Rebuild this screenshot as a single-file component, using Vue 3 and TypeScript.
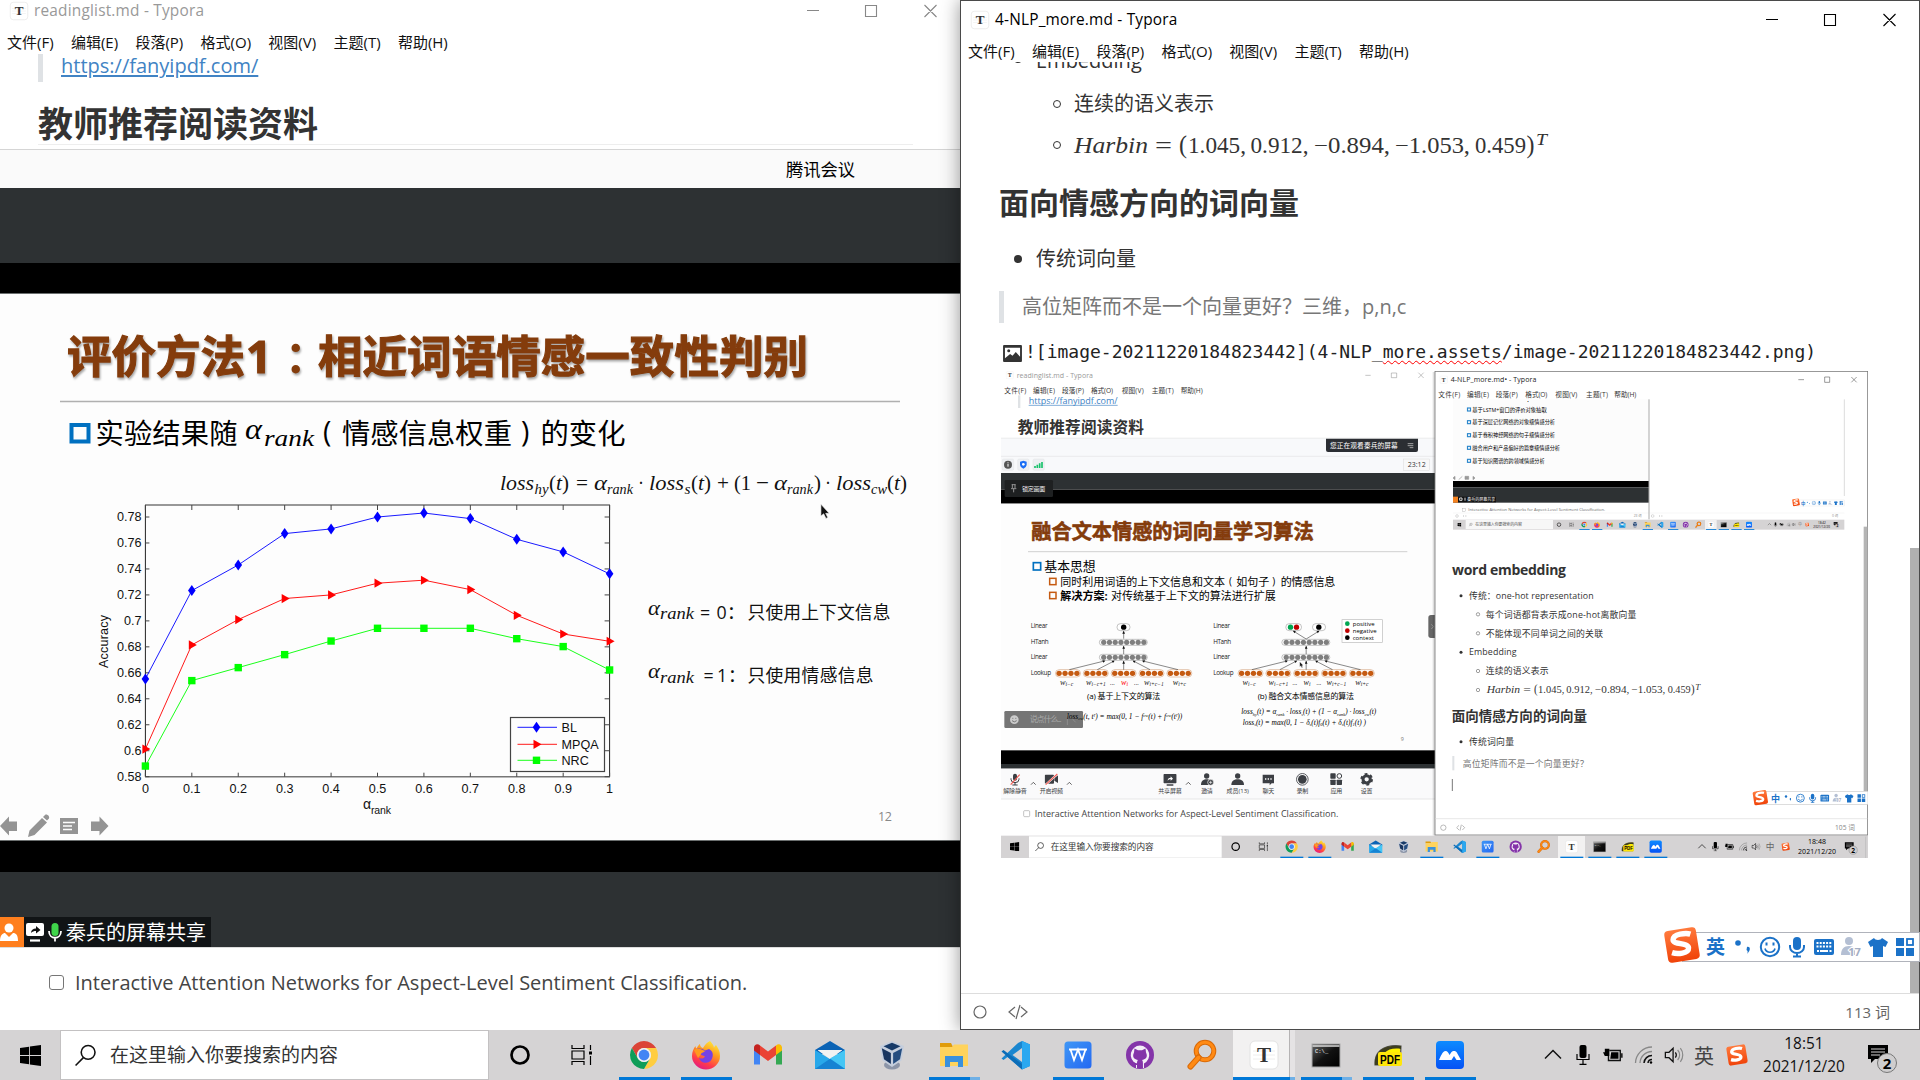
<script setup lang="ts">
type Pt = { x: number; y: number }
interface Series { name: string; color: string; shape: string; pts: Pt[]; ly: number }

const menus: string[] = ['文件(F)', '编辑(E)', '段落(P)', '格式(O)', '视图(V)', '主题(T)', '帮助(H)']

const apps = [
  { id: 'cortana' }, { id: 'taskview' },
  { id: 'chrome', run: true }, { id: 'firefox', run: true }, { id: 'gmail' }, { id: 'mail' }, { id: 'vbox' },
  { id: 'folder', run: true, multi: true }, { id: 'vscode' }, { id: 'wps', run: true }, { id: 'github' }, { id: 'everything' },
  { id: 'typora', run: true, active: true }, { id: 'terminal', run: true, multi: true }, { id: 'pdf', run: true }, { id: 'meeting', run: true },
] as { id: string; run?: boolean; multi?: boolean; active?: boolean }[]

const xAt = (i: number) => 145.4 + i * 46.42
const yAt = (v: number) => 776.7 - (v - 0.58) * 1298.5
const make = (v: number[]): Pt[] => v.map((n, i) => ({ x: xAt(i), y: yAt(n) }))
const series: Series[] = [
  { name: 'BL', color: '#0000ff', shape: '0,-5.5 3.8,0 0,5.5 -3.8,0', ly: 727.3, pts: make([0.6553, 0.7233, 0.743, 0.7672, 0.7708, 0.78, 0.7831, 0.7788, 0.7628, 0.7531, 0.7362]) },
  { name: 'MPQA', color: '#ff0000', shape: '-3,-4.6 5,0 -3,4.6', ly: 744.3, pts: make([0.6013, 0.6815, 0.701, 0.7172, 0.72, 0.729, 0.7313, 0.7241, 0.7043, 0.6899, 0.6843]) },
  { name: 'NRC', color: '#00ff00', shape: '-3.7,-3.7 3.7,-3.7 3.7,3.7 -3.7,3.7', ly: 760.3, pts: make([0.5882, 0.654, 0.664, 0.674, 0.6845, 0.6943, 0.6943, 0.6943, 0.6863, 0.6802, 0.6622]) },
]
const line = (p: Pt[]) => p.map(q => `${q.x.toFixed(1)},${q.y.toFixed(1)}`).join(' ')
const yTicks = ['0.58', '0.6', '0.62', '0.64', '0.66', '0.68', '0.7', '0.72', '0.74', '0.76', '0.78']
const xTicks = ['0', '0.1', '0.2', '0.3', '0.4', '0.5', '0.6', '0.7', '0.8', '0.9', '1']

interface Piece { t: string; x: number; w: number; y?: number; c?: string }
const loss: Piece[] = [
  { t: 'loss', x: 500, w: 34, c: 'it' }, { t: 'hy', x: 534.5, w: 14, y: 4, c: 'it sub' }, { t: '(', x: 549, w: 7 }, { t: 't', x: 556, w: 6, c: 'it' }, { t: ')', x: 562, w: 7 },
  { t: '=', x: 576, w: 12 }, { t: 'α', x: 594, w: 13, c: 'it' }, { t: 'rank', x: 607, w: 26, y: 4, c: 'it sub' }, { t: '·', x: 638, w: 6 },
  { t: 'loss', x: 649, w: 35, c: 'it' }, { t: 's', x: 684.5, w: 6, y: 4, c: 'it sub' }, { t: '(', x: 691, w: 7 }, { t: 't', x: 698, w: 6, c: 'it' }, { t: ')', x: 704, w: 7 },
  { t: '+', x: 717, w: 12 }, { t: '(1', x: 734, w: 17 }, { t: '−', x: 756, w: 13 }, { t: 'α', x: 774, w: 13, c: 'it' }, { t: 'rank', x: 787, w: 26, y: 4, c: 'it sub' },
  { t: ')', x: 814, w: 7 }, { t: '·', x: 825, w: 6 }, { t: 'loss', x: 836, w: 35, c: 'it' }, { t: 'cw', x: 871, w: 16, y: 4, c: 'it sub' }, { t: '(', x: 887, w: 7 }, { t: 't', x: 894, w: 6, c: 'it' }, { t: ')', x: 900, w: 7 },
]
const harbin: Piece[] = [
  { t: 'Harbin', x: 0, w: 74, c: 'it' }, { t: '=', x: 81, w: 17 }, { t: '(', x: 105, w: 8, c: 'par' }, { t: '1.045,', x: 114, w: 58 }, { t: '0.912,', x: 176.5, w: 58 },
  { t: '−0.894,', x: 240, w: 76 }, { t: '−1.053,', x: 321, w: 75 }, { t: '0.459', x: 401, w: 51 }, { t: ')', x: 452.5, w: 8, c: 'par' }, { t: 'T', x: 462, w: 11, y: -8, c: 'it sup' },
]

const nets = [
  { dx: 0, cap: '(a) 基于上下文的算法', cx: 291, cw: 220, red: true },
  { dx: 547.5, cap: '(b) 融合文本情感信息的算法', cx: 255.5, cw: 289, red: false },
]
const layers = [{ t: 'Linear', y: 804 }, { t: 'HTanh', y: 853 }, { t: 'Linear', y: 898 }, { t: 'Lookup', y: 946 }]
const words = [{ t: 'w', s: 'i−c', x: 210, w: 40 }, { t: 'w', s: 'i−c+1', x: 288, w: 59 }, { t: '...', s: '', x: 360, w: 15 }, { t: 'w', s: 'i', x: 393, w: 21 }, { t: '...', s: '', x: 432, w: 15 }, { t: 'w', s: 'i+c−1', x: 462, w: 59 }, { t: 'w', s: 'i+c', x: 548, w: 40 }]
const tools = [
  { id: 'mute', t: '解除静音', x: 75, w: 70 }, { id: 'video', t: '开启视频', x: 184, w: 70 }, { id: 'share', t: '共享屏幕', x: 540, w: 70 }, { id: 'invite', t: '邀请', x: 651, w: 35 },
  { id: 'member', t: '成员(13)', x: 743, w: 67 }, { id: 'chat', t: '聊天', x: 835, w: 35 }, { id: 'rec', t: '录制', x: 937, w: 35 }, { id: 'appsgrid', t: '应用', x: 1039, w: 35 }, { id: 'gear', t: '设置', x: 1130, w: 35 },
]
const topics = [
  { t: '基于LSTM+窗口的评价对象抽取', y: 149, w: 223 }, { t: '基于深层记忆网络的对象级情感分析', y: 187, w: 248 }, { t: '基于卷积神经网络的句子级情感分析', y: 226, w: 248 },
  { t: '融合用户和产品偏好的篇章级情感分析', y: 264, w: 263 }, { t: '基于知识图谱的跨领域情感分析', y: 303, w: 217 },
]
const menuL = [43, 129, 216, 303, 395, 485, 572]
const menuR = [1345, 1431, 1517, 1606, 1696, 1788, 1873]
const tray = [{ id: 'up', x: 2136 }, { id: 'tmic', x: 2176 }, { id: 'battery', x: 2218 }, { id: 'wifi', x: 2260 }, { id: 'volume', x: 2298 }, { id: 'sogou', x: 2387 }]
const ime = ['punct', 'smile', 'bmic', 'keyboard', 'person', 'shirt', 'grid']
</script>

<template>
  <div class="desktop">
    <svg class="sprite" width="0" height="0" aria-hidden="true">
      <defs>
        <linearGradient id="gFox" x1="0.8" y1="0" x2="0.3" y2="1"><stop offset="0" stop-color="#fff03a" /><stop offset=".4" stop-color="#ff9a1f" /><stop offset=".75" stop-color="#ff3b4b" /><stop offset="1" stop-color="#e01a86" /></linearGradient>
        <linearGradient id="gBlue" x1="0" y1="0" x2="1" y2="1"><stop offset="0" stop-color="#3f97f6" /><stop offset="1" stop-color="#2468f2" /></linearGradient>
        <linearGradient id="gMeet" x1="0" y1="0" x2="0" y2="1"><stop offset="0" stop-color="#0d8bff" /><stop offset="1" stop-color="#0552f5" /></linearGradient>
        <linearGradient id="gTerm" x1="0" y1="0" x2="1" y2="1"><stop offset="0" stop-color="#666" /><stop offset=".5" stop-color="#111" /><stop offset="1" stop-color="#000" /></linearGradient>
        <linearGradient id="gS" x1="0" y1="0" x2="0" y2="1"><stop offset="0" stop-color="#ff7a3d" /><stop offset="1" stop-color="#f04309" /></linearGradient>
      </defs>
      <symbol id="win" viewBox="0 0 20 20"><path d="M0 2.8 8.6 1.6V9.5H0zM9.4 1.5 20 0V9.5H9.4zM0 10.4H8.6V18.3L0 17.1zM9.4 10.4H20V20L9.4 18.5z" /></symbol>
      <symbol id="search" viewBox="0 0 22 22"><circle cx="13.5" cy="8" r="6.6" fill="none" stroke="#111" stroke-width="1.5" /><path d="M9 13 1.5 20.5" stroke="#111" stroke-width="1.5" /></symbol>
      <symbol id="cortana" viewBox="0 0 32 32"><circle cx="16" cy="16" r="8.500" fill="none" stroke="#000" stroke-width="2.700" /></symbol>
      <symbol id="taskview" viewBox="0 0 32 32"><path d="M6 6v3.500h12V6M6 26v-3.500h12V26M6 12h12v8H6zM24.500 6v5M24.500 17v9" fill="none" stroke="#000" stroke-width="1.200" /><path d="M23 12.500h3v3h-3z" /></symbol>
      <symbol id="chrome" viewBox="0 0 32 32">
        <path d="M16 9H28.120A14 14 0 0 0 3.880 9L9.940 19.500A7 7 0 0 1 16 9z" fill="#db4437" />
        <path d="M16 9H28.120A14 14 0 0 0 3.880 9L9.940 19.500A7 7 0 0 1 16 9z" fill="#ffcd40" transform="rotate(120 16 16)" />
        <path d="M16 9H28.120A14 14 0 0 0 3.880 9L9.940 19.500A7 7 0 0 1 16 9z" fill="#0f9d58" transform="rotate(240 16 16)" />
        <circle cx="16" cy="16" r="7" fill="#f1f1f1" /><circle cx="16" cy="16" r="5.400" fill="#4285f4" />
      </symbol>
      <symbol id="firefox" viewBox="0 0 32 32">
        <path d="M20 2c2 2 4 5 4 7 0-1 1-2 2-3 2 3 4 6 4 11a14 13.500 0 0 1-28 0c0-4 1.500-7.500 3.500-10 .2 1.500.5 2 1 2.500C8 7 9 5.500 10 5c0 2 1 3.500 3 4 2-3.500 4-5.500 7-7z" fill="url(#gFox)" />
        <path d="M7 10c3-1 6 0 8 1.500l4-1.500c3 1.500 4.500 4.500 3.500 8A7 7 0 0 1 9 19c3 1.500 5 0 6-1.500-2-1-4-1.500-6.500-3.500z" fill="#7542e5" /><path d="M4 11c5-3 9 0 11 1-1 1.500-4 1.500-4.500 4L8 19z" fill="#ff9a1f" />
      </symbol>
      <symbol id="gmail" viewBox="0 0 32 32"><path d="M2 8v17.500h6V14z" fill="#4285f4" /><path d="M24 14v11.500h6V8z" fill="#34a853" /><path d="M2 9c0-4 4-4.500 6-2.500V16l-6-4.500z" fill="#c5221f" /><path d="M24 6.500C27 4 30 6 30 9v2.500L24 16z" fill="#fbbc04" /><path d="M8 6.500 16 12.500 24 6.500V16l-8 6-8-6z" fill="#ea4335" /></symbol>
      <symbol id="mail" viewBox="0 0 32 32"><path d="M1 11 16 2 31 11V15H1z" fill="#0b63b5" /><path d="M1 11 16 20 31 11V30H1z" fill="#28a8ea" /><path d="M4 11.500 16 20 28 11.500v-.5H4z" fill="#f2f2f2" /><path d="M16 19.500 31 11V30z" fill="#45c6f5" /><path d="M1 30 16 19.800 31 30z" fill="#1683d3" /></symbol>
      <symbol id="vbox" viewBox="0 0 32 32"><ellipse cx="16" cy="26" rx="8" ry="4.500" fill="#8c95a8" /><path d="M16 2 28 7 25.500 21.500 16 28 6.500 21.500 4 7z" fill="#c5cedd" /><path d="M16 3.800 24.500 7.300 16 11.500 7.500 7.300z" fill="#173a68" /><path d="M5.800 9.300 14.900 14V25L8 20.300z" fill="#19355f" /><path d="M26.200 9.300 17.100 14V25L24 20.300z" fill="#254d80" /></symbol>
      <symbol id="folder" viewBox="0 0 32 32"><path d="M2 4h11l2 4H2z" fill="#e09c0a" /><path d="M2 8h12l2-2.500h14V27H2z" fill="#ffd35c" /><path d="M7 28V17h18v11h-5v-5h-8v5z" fill="#3a91dd" /></symbol>
      <symbol id="vscode" viewBox="0 0 32 32"><path d="M22 2 30 5.500V27L22 30.500 7.500 18 3.500 21 1.500 19.500 18 4z" fill="#1a86cf" /><path d="M1.500 12.500 3.500 11 22 25v5.500z" fill="#0c6db8" /><path d="M22 9v14L12.500 16z" fill="#d5d3d4" /><path d="M22 2 30 5.500V27L22 30.500z" fill="#2ba8f0" /></symbol>
      <symbol id="wps" viewBox="0 0 32 32"><rect x="2.500" y="2.500" width="27" height="27" rx="3.500" fill="url(#gBlue)" /><path d="M7 10.500h18M8.500 10.500 12 21l4-10.500L20 21l3.500-10.500" fill="none" stroke="#fff" stroke-width="1.800" /></symbol>
      <symbol id="github" viewBox="0 0 32 32"><circle cx="16" cy="16" r="14" fill="#8434a9" /><path d="M16 6.500a9.500 9.500 0 0 0-4 18V29h8v-4.500a9.500 9.500 0 0 0-4-18z" fill="#f4eef7" /><path d="M10.500 9.500l3.500 1.800h4l3.500-1.800.5 4c2.500 5-1 7-4 7.500 1 1 1 2 1 8h-6v-3c-3 0-3-2-4.500-3 2-.3 2.500 1.500 4.500 1.200 0-1.500.3-2.500 1-3.200-3-.5-6.500-2.500-4-7.500z" fill="#8434a9" /></symbol>
      <symbol id="everything" viewBox="0 0 32 32"><circle cx="19" cy="12" r="8.800" fill="none" stroke="#d96a08" stroke-width="5" /><circle cx="19" cy="12" r="8.800" fill="none" stroke="#ff8a14" stroke-width="3" /><path d="M12.500 18.500 4.500 27.500" stroke="#d96a08" stroke-width="6" stroke-linecap="round" /><path d="M12.500 18.500 4.500 27.500" stroke="#ff8a14" stroke-width="4" stroke-linecap="round" /></symbol>
      <symbol id="typora" viewBox="0 0 32 32"><rect x="2" y="2" width="28" height="28" rx="5" fill="#fff" stroke="#e2e2e2" /><path d="M5 12h22M5 16h22M5 20h22" stroke="#eee" /><text x="16" y="23" text-anchor="middle" font-size="21" class="tglyph">T</text></symbol>
      <symbol id="terminal" viewBox="0 0 32 32"><rect x="2" y="5" width="28" height="23" fill="url(#gTerm)" stroke="#aaa" stroke-width="1" /><path d="M2.500 7h27" stroke="#ddd" stroke-width="1.500" /><text x="5" y="14" font-size="5.500" fill="#fff" font-family="Liberation Mono, monospace">C:\_</text></symbol>
      <symbol id="pdf" viewBox="0 0 32 32"><path d="M3 26C2 14 10 5 29 7l-1 19z" fill="#fff200" stroke="#555" stroke-width="1.200" /><path d="M3 26C2 14 10 5 29 7v3C16 8 9 14 7 26z" fill="#3d3d20" /><rect x="6" y="13" width="24" height="14" rx="2" fill="#ffe60a" /><text x="18" y="24.500" text-anchor="middle" font-size="12" textLength="20" lengthAdjust="spacingAndGlyphs" font-weight="700" font-family="Liberation Sans, sans-serif">PDF</text></symbol>
      <symbol id="meeting" viewBox="0 0 32 32"><rect x="2" y="2" width="28" height="28" rx="4" fill="url(#gMeet)" /><path d="M5 21c1.500-3 3.500-9 6.500-9 2 0 3 2 4 4l2-3c1-1.500 4-1.500 5 0l4.500 8h-4.500l-2.500-4-2.500 4z" fill="#fff" /></symbol>
      <symbol id="up" viewBox="0 0 20 20"><path d="M2 13.500 10 5.500 18 13.500" fill="none" stroke="#111" stroke-width="1.500" /></symbol>
      <symbol id="tmic" viewBox="0 0 20 20"><rect x="6.500" y="0" width="7" height="13" rx="2" /><path d="M4 9v5.500h12V9M10 15v4M6.500 19.300h7" fill="none" stroke="#000" stroke-width="1.200" /></symbol>
      <symbol id="battery" viewBox="0 0 22 20"><path d="M7 5h12v11H6v-5" fill="none" stroke="#111" stroke-width="1.500" /><path d="M9 7h8v7H8zM20 8h1.500v5H20zM2 3v4h5V3H6M3 3v2M0 7h7v4H2z" /></symbol>
      <symbol id="wifi" viewBox="0 0 20 20"><g fill="none" stroke="#111"><path d="M1.500 18A16.500 16.500 0 0 1 18 2" stroke="#888" stroke-width="1.300" /><path d="M6 18A12 12 0 0 1 18 6.500" stroke="#888" stroke-width="1.300" /><path d="M10 18A8 8 0 0 1 18 10.500M14 18a4 4 0 0 1 4-3.500" stroke-width="1.500" /></g><circle cx="17" cy="17.500" r="1.200" /></symbol>
      <symbol id="volume" viewBox="0 0 22 20"><path d="M1.500 7h4L10 2.500v15L5.500 13h-4z" fill="none" stroke="#111" stroke-width="1.400" /><path d="M12.500 7a5 5 0 0 1 0 6" fill="none" stroke="#111" stroke-width="1.300" /><path d="M15 4.500a8 8 0 0 1 0 11M18 2.500a12 12 0 0 1 0 15" fill="none" stroke="#888" stroke-width="1.300" /></symbol>
      <symbol id="sogou" viewBox="0 0 40 40"><g transform="rotate(-9 20 20)"><rect x="4" y="4" width="32" height="32" rx="4" fill="url(#gS)" /><path d="M30 10.500c-4-2-17-3-18 3-.8 5 14.500 5 14 10.500-.6 5.500-12 4.500-17 2" fill="none" stroke="#fff" stroke-width="5.400" /></g></symbol>
      <symbol id="notify" viewBox="0 0 30 30"><path d="M1 2h20v14H8l-4 4v-4H1z" /><path d="M4 6h14M4 9h14M4 12h9" stroke="#d5d3d4" stroke-width="1" /><circle cx="20" cy="20" r="9.500" fill="#cfcdce" stroke="#777" stroke-width="1" /><text x="20" y="25.500" font-size="15" font-weight="700" text-anchor="middle">2</text></symbol>
      <symbol id="punct" viewBox="0 0 24 24"><circle cx="7" cy="8" r="2.800" /><path d="M16 12c3-1 4.500 3 0 7 1-2 1-3-.5-4z" /></symbol>
      <symbol id="smile" viewBox="0 0 24 24"><circle cx="12" cy="12" r="9.200" fill="none" stroke="#1b72c8" stroke-width="2" /><path d="M8.500 7.500v3M15.500 7.500v3" stroke="#1b72c8" stroke-width="2" /><path d="M7 13.500a5.200 5.200 0 0 0 10 0" fill="none" stroke="#1b72c8" stroke-width="1.700" /></symbol>
      <symbol id="bmic" viewBox="0 0 24 24"><rect x="8" y="2" width="8" height="13" rx="4" /><path d="M5 10v2a7 6 0 0 0 14 0v-2M12 18v4M8 21.500h8" fill="none" stroke="#1b72c8" stroke-width="2" /></symbol>
      <symbol id="keyboard" viewBox="0 0 24 24"><rect x="2" y="4" width="20" height="16" rx="2" /><path d="M4.500 8h15M4.500 11.500h15" stroke="#fff" stroke-width="1.800" stroke-dasharray="2 1.200" /><path d="M5 16h2M8 16h8M17.500 16h2" stroke="#fff" stroke-width="1.800" /></symbol>
      <symbol id="person" viewBox="0 0 24 24"><circle cx="10" cy="6" r="4" fill="#b4bfd3" /><path d="M2 20c0-6 3-9 8-9 3 0 5 1 6 3v6z" fill="#b4bfd3" /><text x="15.500" y="21" font-size="11" font-weight="700" text-anchor="middle" fill="#a3aec4" stroke="#fff" stroke-width="2" paint-order="stroke">17</text></symbol>
      <symbol id="shirt" viewBox="0 0 24 24"><path d="M8 3c1 2.500 7 2.500 8 0l6 4-2.500 5-2.500-1v11H7V11l-2.500 1L2 7z" /></symbol>
      <symbol id="grid" viewBox="0 0 24 24"><path d="M3 3h8v8H3zM3 13h8v8H3zM13 13h8v8h-8z" /><rect x="14" y="4" width="6" height="6" fill="none" stroke="#1b72c8" stroke-width="1.800" /></symbol>
      <symbol id="pic" viewBox="0 0 20 18"><rect width="20" height="18" rx="1" fill="#333" /><path d="M2 3h16v9.500l-4.500-5-3.500 4-2.500-2L2 14z" fill="#fff" /><circle cx="6" cy="6" r="1.600" fill="#333" /></symbol>
      <symbol id="mute" viewBox="0 0 40 40"><rect x="14" y="3" width="12" height="21" rx="6" /><path d="M8 17v3a12 10 0 0 0 24 0v-3M20 30v7M12 37h16" fill="none" stroke="#3c3f44" stroke-width="3" /><path d="M34 6 7 36" stroke="#f25b54" stroke-width="3.500" /></symbol>
      <symbol id="video" viewBox="0 0 40 40"><rect x="0" y="6" width="28" height="27" rx="3" /><path d="M29 16 40 8v23l-11-7z" /><path d="M38 4 3 36" stroke="#fff" stroke-width="6" /><path d="M38 4 3 36" stroke="#f25b54" stroke-width="3.500" /></symbol>
      <symbol id="share" viewBox="0 0 40 40"><rect x="0" y="4" width="40" height="28" rx="3" /><path d="M10 37h20" stroke="#3c3f44" stroke-width="4" /><path d="M13 24c0-6 3-9 9-9v-4l7 7-7 6v-4c-4 0-6 1-9 4z" fill="#fff" /></symbol>
      <symbol id="invite" viewBox="0 0 40 40"><circle cx="19" cy="10" r="8" /><path d="M2 37c0-13 8-17 17-17 6 0 9 2 12 4v13z" /><circle cx="31" cy="29" r="9" fill="#3c3f44" stroke="#fff" stroke-width="2" /><path d="M31 24v10M26 29h10" stroke="#fff" stroke-width="2" /></symbol>
      <symbol id="member" viewBox="0 0 40 40"><circle cx="20" cy="10" r="8" /><path d="M1 37c0-13 9-17 19-17s19 4 19 17z" /></symbol>
      <symbol id="chat" viewBox="0 0 40 40"><path d="M3 6h34v26h-7l-6 6v-6H3z" /><path d="M10 19h4M18 19h4M26 19h4" stroke="#fff" stroke-width="4" /></symbol>
      <symbol id="rec" viewBox="0 0 40 40"><circle cx="20" cy="20" r="17.500" fill="none" stroke="#3c3f44" stroke-width="2.500" /><circle cx="20" cy="20" r="13" /></symbol>
      <symbol id="appsgrid" viewBox="0 0 40 40"><rect x="2" y="2" width="16" height="16" rx="2" /><rect x="2" y="21" width="16" height="16" rx="2" /><rect x="21" y="21" width="16" height="16" rx="2" /><circle cx="29" cy="10" r="7" fill="none" stroke="#3c3f44" stroke-width="3" /></symbol>
      <symbol id="gear" viewBox="0 0 40 40"><circle cx="20" cy="20" r="11" fill="none" stroke="#3c3f44" stroke-width="9" /><circle cx="20" cy="20" r="16" fill="none" stroke="#3c3f44" stroke-width="6" stroke-dasharray="8.400 8.400" /></symbol>
      <symbol id="cursor" viewBox="0 0 12 18"><path d="M1 1v13l3-2.500 2.500 5 2-1-2.300-4.500H10z" fill="#111" stroke="#eee" stroke-width=".7" /></symbol>
    </svg>

    <!-- background window -->
    <section class="window left">
      <header class="titlebar">
        <svg class="ticon"><use href="#typora" /></svg><span class="title">readinglist.md - Typora</span>
        <svg class="controls" viewBox="0 0 128 14"><path d="M0 6.500h12M58.500 1.500h11v11h-11zM117.500 1l12 12M129.500 1l-12 12" /></svg>
      </header>
      <nav class="menu"><span v-for="m in menus" :key="m">{{ m }}</span></nav>
      <blockquote class="linkquote"><a>https://fanyipdf.com/</a></blockquote>
      <h1 class="lhead">教师推荐阅读资料</h1>
      <div class="meethead"><span>腾讯会议</span></div>
      <div class="dark"></div>
      <div class="black top"></div>
      <svg class="slide" viewBox="0 293 960 548" width="960" height="548">
        <rect x="0" y="293" width="960" height="548" fill="#fdfdfd" />
        <path d="M0 293.500H960M0 840.500H960" stroke="#6b6f6f" />
        <g class="stitle">
          <text x="67" y="372.500" textLength="178">评价方法</text><text x="246" y="372.500">1</text><text x="273.500" y="374.500" class="tc">：</text><text x="318" y="372.500" textLength="490">相近词语情感一致性判别</text>
        </g>
        <path d="M60 401.500H900" stroke="#b0b0b0" stroke-width="1.300" />
        <rect x="71.500" y="425" width="17" height="16.500" fill="none" stroke="#0070c0" stroke-width="4" />
        <g class="sbody">
          <text x="95.500" y="443.500" textLength="142">实验结果随</text>
          <text x="323" y="442">(</text><text x="342" y="443.500" textLength="170">情感信息权重</text><text x="521" y="442">)</text><text x="540.500" y="443.500" textLength="85">的变化</text>
        </g>
        <g class="math"><text x="245" y="439" font-size="30" class="it" textLength="17" lengthAdjust="spacingAndGlyphs">α</text><text x="264" y="446" font-size="24" class="it" textLength="50" lengthAdjust="spacingAndGlyphs">rank</text></g>
        <g class="math loss"><text v-for="(p, i) in loss" :key="i" :x="p.x" :y="490 + (p.y || 0)" :class="p.c" :textLength="p.w" lengthAdjust="spacingAndGlyphs">{{ p.t }}</text></g>

        <g class="chart">
          <path d="M145.400 505V776.700M609.600 505V776.700" stroke="#222" stroke-width="1" fill="none" />
          <path d="M145 505H610M145 776.700H610" stroke="#777" stroke-width="1.600" />
          <g v-for="(t, i) in xTicks" :key="'x' + t">
            <path :d="`M${xAt(i)} 505v5M${xAt(i)} 776.700v-4`" stroke="#444" stroke-width="1" />
            <text :x="xAt(i)" y="793" text-anchor="middle">{{ t }}</text>
          </g>
          <g v-for="(t, i) in yTicks" :key="'y' + t">
            <path :d="`M145.400 ${776.700 - i * 25.970}h4M609.600 ${776.700 - i * 25.970}h-5`" stroke="#444" stroke-width="1" />
            <text x="141.500" :y="781 - i * 25.970" text-anchor="end">{{ t }}</text>
          </g>
          <text x="363" y="808.500" font-size="14">α</text><text x="371" y="814" font-size="10.500" textLength="20">rank</text>
          <text transform="translate(108 668) rotate(-90)" textLength="53">Accuracy</text>
          <g v-for="s in series" :key="s.name">
            <polyline :points="line(s.pts)" fill="none" :stroke="s.color" stroke-width=".9" />
            <polygon v-for="(p, i) in s.pts" :key="i" :points="s.shape" :fill="s.color" :transform="`translate(${p.x} ${p.y})`" />
          </g>
          <rect x="510.500" y="717.500" width="94" height="54" fill="#fdfdfd" stroke="#444" stroke-width="1.200" />
          <g v-for="s in series" :key="'l' + s.name">
            <path :d="`M517.500 ${s.ly}H557`" :stroke="s.color" stroke-width=".9" /><polygon :points="s.shape" :fill="s.color" :transform="`translate(536.500 ${s.ly})`" />
            <text x="561.500" :y="s.ly + 5">{{ s.name }}</text>
          </g>
        </g>

        <g class="note">
          <text x="648" y="615" class="m" font-size="22" textLength="12" lengthAdjust="spacingAndGlyphs">α</text><text x="660" y="619" class="m" font-size="17" textLength="34" lengthAdjust="spacingAndGlyphs">rank</text><text x="700" y="618.500">=</text><text x="716.500" y="618.500">0</text><text x="727" y="618.500">：</text><text x="747.500" y="618.500" textLength="143">只使用上下文信息</text>
          <text x="648" y="678" class="m" font-size="22" textLength="12" lengthAdjust="spacingAndGlyphs">α</text><text x="660" y="682.500" class="m" font-size="17" textLength="34" lengthAdjust="spacingAndGlyphs">rank</text><text x="703.500" y="681.500">=</text><text x="717" y="681.500">1</text><text x="728" y="681.500">：</text><text x="747.500" y="681.500" textLength="126">只使用情感信息</text>
        </g>
        <use href="#cursor" x="820" y="503" width="11" height="17" />
        <text x="878" y="821" font-size="12.500" fill="#888" textLength="14">12</text>
        <g fill="#949494">
          <path d="M0 826 9 816.500V821.500H17V831H9V835.500z" /><path d="M108.500 826 99.500 816.500V821.500H91V831H99.500V835.500z" />
          <path d="M28 837l1.500-6.500L42 818l5 4.500L34.500 835zM43 817l2-2c2-1.500 5 1.500 4 3.500l-2 2z" /><path d="M60 818h18v16H60z" /><path d="M63 822.500h12M63 826h9M63 829.500h9" stroke="#fdfdfd" stroke-width="1.400" />
        </g>
      </svg>
      <div class="black bottom"></div>
      <div class="dark foot">
        <div class="badge">
          <svg class="who" viewBox="0 0 24 30"><circle cx="9" cy="11" r="4.500" fill="#fff" /><path d="M0 24c0-6 3-8 5-8l4 4 4-4c3 0 5 2 5 8z" fill="#fff" /></svg>
          <svg class="scr" viewBox="0 0 40 30"><rect x="2" y="6" width="18" height="13" rx="2" fill="#fff" /><path d="M6 23.500h10" stroke="#fff" stroke-width="2.200" /><path d="M7 16c0-3 2-4.500 5-4.500V9l4.500 4-4.500 3.500V14c-2 0-3.500.5-5 2z" fill="#111" /><rect x="27.500" y="6" width="7" height="13" rx="3.500" fill="#3fd44a" /><path d="M25 14c0 9 12 9 12 0M31 21v3.500" stroke="#fff" stroke-width="1.800" fill="none" /></svg>
          <span>秦兵的屏幕共享</span>
        </div>
      </div>
      <label class="task"><i class="box"></i><span>Interactive Attention Networks for Aspect-Level Sentiment Classification.</span></label>
    </section>

    <!-- foreground window -->
    <section class="window right">
      <header class="titlebar">
        <svg class="ticon"><use href="#typora" /></svg><span class="title">4-NLP_more.md - Typora</span>
        <svg class="controls" viewBox="0 0 128 14"><path d="M0 6.500h12M58.500 1.500h11v11h-11zM117.500 1l12 12M129.500 1l-12 12" /></svg>
      </header>
      <nav class="menu"><span v-for="m in menus" :key="m">{{ m }}</span></nav>
      <main class="doc">
        <div class="li one cut"><i class="dash"></i>Embedding</div>
        <div class="li two"><i class="ring"></i>连续的语义表示</div>
        <div class="li two formula"><i class="ring"></i>
          <svg class="math harbin" viewBox="0 -28 476 40" width="476" height="40"><text v-for="(p, i) in harbin" :key="i" :x="p.x" :y="p.y || 0" :class="p.c" :textLength="p.w" lengthAdjust="spacingAndGlyphs">{{ p.t }}</text></svg>
        </div>
        <h2 class="rhead">面向情感方向的词向量</h2>
        <div class="li one trad"><i class="disc"></i>传统词向量</div>
        <blockquote class="rquote">高位矩阵而不是一个向量更好？三维，p,n,c</blockquote>
        <div class="code"><svg class="pic"><use href="#pic" /></svg><span>![image-20211220184823442](4-NLP_<u>more.assets</u>/image-20211220184823442.png)</span></div>

        <svg class="shot" viewBox="33 33 2601 1464" width="867" height="488">
          <rect x="33" y="33" width="2601" height="1464" fill="#fff" />
          <svg x="47" y="33" width="25" height="25" viewBox="0 0 32 32"><use href="#typora" /></svg>
          <text x="80" y="54" font-size="21" fill="#999" textLength="229">readinglist.md - Typora</text>
          <path d="M1126 46h16M1204 39h16v14h-16zM1285 38l16 16M1301 38l-16 16" stroke="#888" stroke-width="1.500" fill="none" />
          <text v-for="(m, i) in menus" :key="'ml' + i" :x="menuL[i]" y="98" font-size="20" fill="#333" textLength="66">{{ m }}</text>
          <rect x="84" y="106" width="7" height="38" fill="#dfe2e5" />
          <text x="116" y="132" font-size="27" fill="#4183c4" textLength="267">https://fanyipdf.com/</text><path d="M116 136H383" stroke="#4183c4" stroke-width="2" />
          <text x="83" y="219" font-size="47" font-weight="700" fill="#333" textLength="379">教师推荐阅读资料</text>
          <rect x="33" y="234" width="1302" height="105" fill="#f8f9fb" /><path d="M33 234.500H1335M33 289H1335" stroke="#ddd" stroke-width="1.500" />
          <path d="M1008 236h276v34q0 6-6 6h-264q-6 0-6-6z" fill="#2b2e33" />
          <text x="1020" y="264" font-size="20" fill="#fff" textLength="203">您正在观看秦兵的屏幕</text><path d="M1253 251h17M1253 257h17M1259 263h11" stroke="#ddd" stroke-width="2" />
          <g fill="#eef0f3" stroke="#ddd"><rect x="37" y="297" width="34" height="34" rx="4" /><rect x="83" y="297" width="34" height="34" rx="4" /><rect x="129" y="297" width="34" height="34" rx="4" /><rect x="1240" y="297" width="79" height="34" fill="#f8f8f8" stroke="#ccc" /></g>
          <circle cx="54" cy="314" r="12" fill="#555" /><path d="M54 307v3M54 312v8" stroke="#fff" stroke-width="3" />
          <path d="M100 302l10 3v10q-1 8-10 11-9-3-10-11v-10z" fill="#1a6ef5" /><circle cx="100" cy="313" r="4" fill="#fff" />
          <path d="M135 324v-6M142 324v-10M149 324v-14M156 324v-18" stroke="#18c26b" stroke-width="5" />
          <text x="1253" y="322" font-size="21" fill="#333" textLength="54">23:12</text>
          <rect x="33" y="339" width="1302" height="50" fill="#2d3133" /><rect x="33" y="389" width="1302" height="42" /><rect x="44" y="360" width="145" height="51" rx="4" fill="#1e2021" />
          <path d="M65 374h12M67 374v10M75 374v10M63 386h16M71 386v11" stroke="#aaa" stroke-width="2.500" /><text x="96" y="392" font-size="18" fill="#eee" textLength="70">锁定画面</text>
          <rect x="33" y="431" width="1302" height="740" fill="#fdfdfd" />
          <text x="124" y="536" font-size="60.500" font-weight="700" fill="#843c0c" stroke="#843c0c" stroke-width="2" textLength="847">融合文本情感的词向量学习算法</text>
          <path d="M114 575H1252" stroke="#bbb" stroke-width="2" />
          <rect x="130" y="608" width="22" height="22" fill="none" stroke="#0070c0" stroke-width="5" /><text x="163" y="632" font-size="38.500" textLength="154">基本思想</text>
          <g fill="none" stroke="#c55a11" stroke-width="4.500"><rect x="179" y="655" width="19" height="19" /><rect x="179" y="697" width="19" height="19" /></g>
          <text x="211" y="677" font-size="33" textLength="494">同时利用词语的上下文信息和文本</text><text x="717" y="676" font-size="30">(</text><text x="739" y="677" font-size="33" textLength="99">如句子</text><text x="847" y="676" font-size="30">)</text><text x="872" y="677" font-size="33" textLength="164">的情感信息</text>
          <text x="211" y="719" font-size="33" font-weight="700" textLength="142">解决方案:</text><text x="363" y="719" font-size="33" textLength="494">对传统基于上下文的算法进行扩展</text>

          <g v-for="n in nets" :key="n.cap" :transform="`translate(${n.dx} 0)`">
            <text v-for="(l, i) in layers" :key="i" x="122" :y="l.y" font-size="19" fill="#222" :textLength="[51, 54, 51, 61][i]">{{ l.t }}</text>
            <g fill="#fff" stroke="#888" stroke-width="1.500">
              <template v-if="n.red"><rect x="381" y="791" width="39" height="21" rx="10" /></template>
              <template v-else><rect x="340" y="791" width="47" height="21" rx="10" /><rect x="420" y="791" width="39" height="21" rx="10" /></template>
              <rect x="328" y="838" width="144" height="18" rx="9" /><rect x="328" y="883" width="144" height="18" rx="9" />
            </g>
            <circle v-if="n.red" cx="401" cy="801.500" r="8" />
            <template v-else><circle cx="354" cy="801.500" r="8" fill="#00a651" /><circle cx="372" cy="801.500" r="8" fill="#c00000" /><circle cx="439" cy="801.500" r="8" /></template>
            <g v-for="i in 8" :key="i" fill="#7f7f7f"><circle :cx="324 + i * 17.200" cy="847" r="7.800" /><circle :cx="324 + i * 17.200" cy="892" r="7.800" /></g>
            <g v-for="k in 5" :key="'p' + k">
              <rect :x="113 + k * 83.500" y="929" width="75" height="22" rx="11" fill="#fff" stroke="#c98b5c" stroke-width="1.500" />
              <circle v-for="j in 4" :key="j" :cx="106 + k * 83.500 + j * 17.800" cy="940" r="8" fill="#c55a11" />
            </g>
            <g stroke="#222" stroke-width="1.600" fill="none"><path d="M238 929 343 903M322 929 372 903M401 929V903M480 929 430 903M564 929 459 903M401 882V859" /><path v-if="n.red" d="M401 836V814" /><path v-else d="M401 837 364 814M401 837 438 814" /></g>
            <g fill="#111"><path d="M346 902l-9-1 3 7zM374 902l-9 0 4 7zM401 902l-4 9h8zM428 902l9 0-4 7zM456 902l9-1-3 7zM401 857l-4 9h8z" /><path v-if="n.red" d="M401 812l-4 9h8z" /><path v-else d="M361 812l9 1-4 7zM441 812l-9 1 4 7z" /></g>
            <text v-for="(w, i) in words" :key="'w' + i" :x="w.x" y="974" font-size="25" class="wd" :textLength="w.w" lengthAdjust="spacingAndGlyphs" :fill="n.red && i === 3 ? '#f00' : '#222'">{{ w.t }}<tspan font-size="17" dy="4">{{ w.s }}</tspan></text>
            <text :x="n.cx" y="1017" font-size="24" :textLength="n.cw">{{ n.cap }}</text>
          </g>
          <rect x="1056" y="779" width="121" height="68" fill="#fff" stroke="#bbb" stroke-width="2" />
          <circle cx="1072" cy="791" r="7" fill="#00a651" /><circle cx="1072" cy="812" r="7" fill="#c00000" /><circle cx="1072" cy="833" r="7" />
          <g font-size="18"><text x="1088" y="797" textLength="66">positive</text><text x="1088" y="818" textLength="72">negative</text><text x="1088" y="839" textLength="64">context</text></g>
          <use href="#cursor" x="928" y="904" width="14" height="21" />
          <rect x="43" y="1053" width="236" height="51" rx="4" fill="#757575" /><circle cx="73" cy="1079" r="13" fill="#ccc" /><path d="M67 1075h3M76 1075h3M66 1082q7 7 14 0" stroke="#666" stroke-width="2.500" fill="none" />
          <text x="119" y="1087" font-size="24" fill="#a9a9a9" textLength="96">说点什么...</text><path d="M232 1063v32M257 1071l-8 8 8 8" stroke="#999" stroke-width="2" fill="none" />
          <g class="math" font-size="25">
            <text x="230" y="1077" class="it" textLength="347" lengthAdjust="spacingAndGlyphs">loss<tspan font-size="15" dy="4">cw</tspan><tspan dy="-4">(t, tʳ) = max(0, 1 − f</tspan><tspan font-size="15" dy="-7">cw</tspan><tspan dy="7">(t) + f</tspan><tspan font-size="15" dy="-7">cw</tspan><tspan dy="7">(tʳ))</tspan></text>
            <text x="754" y="1063" class="it" textLength="405" lengthAdjust="spacingAndGlyphs">loss<tspan font-size="15" dy="4">hy</tspan><tspan dy="-4">(t) = α</tspan><tspan font-size="15" dy="4">rank</tspan><tspan dy="-4"> · loss</tspan><tspan font-size="15" dy="4">s</tspan><tspan dy="-4">(t) + (1 − α</tspan><tspan font-size="15" dy="4">rank</tspan><tspan dy="-4">) · loss</tspan><tspan font-size="15" dy="4">cw</tspan><tspan dy="-4">(t)</tspan></text>
            <text x="758" y="1095" class="it" textLength="370" lengthAdjust="spacingAndGlyphs">loss<tspan font-size="15" dy="4">s</tspan><tspan dy="-4">(t) = max(0, 1 − δ</tspan><tspan font-size="15" dy="4">s</tspan><tspan dy="-4">(t)f</tspan><tspan font-size="15" dy="4">0</tspan><tspan dy="-4">(t) + δ</tspan><tspan font-size="15" dy="4">s</tspan><tspan dy="-4">(t)f</tspan><tspan font-size="15" dy="4">1</tspan><tspan dy="-4">(t) )</tspan></text>
          </g>
          <text x="1232" y="1143" font-size="16" fill="#777">9</text>
          <path d="M1335 765h-12q-8 0-8 8v53q0 8 8 8h12z" fill="#666" /><path d="M1324 793l6 7-6 7" stroke="#aaa" stroke-width="2" fill="none" />
          <rect x="33" y="1171" width="1302" height="41" /><rect x="33" y="1212" width="1302" height="14" fill="#2d3133" />
          <rect x="33" y="1226" width="1302" height="91" fill="#fafafb" /><path d="M33 1317H1335" stroke="#ddd" stroke-width="2" />
          <g v-for="t in tools" :key="t.id" fill="#3c3f44"><use :href="'#' + t.id" :x="t.x - 20" y="1238" width="40" height="40" /><text :x="t.x - t.w / 2" y="1298" font-size="18" :textLength="t.w">{{ t.t }}</text></g>
          <path d="M123 1274l7-7 7 7M231 1274l7-7 7 7M588 1274l7-7 7 7" stroke="#444" stroke-width="2.500" fill="none" />
          <rect x="101" y="1352" width="18" height="18" rx="3" fill="#fff" stroke="#888" stroke-width="1.500" /><text x="134" y="1371" font-size="27" fill="#444" textLength="911">Interactive Attention Networks for Aspect-Level Sentiment Classification.</text>

          <rect x="33" y="1427" width="2601" height="67" fill="#d5d3d4" /><rect x="117" y="1429" width="578" height="64" fill="#fff" />
          <use href="#win" x="60" y="1446" width="28" height="28" /><use href="#search" x="134" y="1446" width="29" height="29" />
          <text x="182" y="1470" font-size="26" fill="#333" textLength="309">在这里输入你要搜索的内容</text>
          <rect x="1704" y="1427" width="81" height="67" fill="#f2f1f1" />
          <g v-for="(a, i) in apps" :key="'n' + i"><use :href="'#' + a.id" :x="716 + i * 84" y="1439" width="42" height="42" /><rect v-if="a.run" :x="703 + i * 84" y="1490" width="69" height="4" fill="#0078d7" /></g>
          <use v-for="t in tray" :key="t.id" :href="'#' + t.id" :x="t.x - 14" y="1446" width="28" height="28" />
          <text x="2327" y="1469" font-size="26" fill="#666">中</text><text x="2454" y="1453" font-size="21" textLength="54">18:48</text><text x="2424" y="1482" font-size="21" textLength="114">2021/12/20</text><use href="#notify" x="2563" y="1444" width="40" height="40" /><path d="M2627 1430v64" stroke="#999" />

          <rect x="1328" y="36" width="7" height="1390" fill="#000" opacity=".12" />
          <rect x="1335" y="34" width="1298" height="1391" fill="#fff" stroke="#777" stroke-width="2.500" />
          <svg x="1348" y="46" width="26" height="26" viewBox="0 0 32 32"><use href="#typora" /></svg>
          <text x="1382" y="67" font-size="21" fill="#222" textLength="257">4-NLP_more.md• - Typora</text>
          <path d="M2425 59h17M2504 51h15v16h-15zM2584 51l16 16M2600 51l-16 16" stroke="#444" stroke-width="1.600" fill="none" />
          <text v-for="(m, i) in menus" :key="'mr' + i" :x="menuR[i]" y="110" font-size="20" fill="#333" textLength="66">{{ m }}</text>
          <rect x="1389" y="118" width="588" height="245" fill="#fcfcfc" /><text x="1612" y="128" font-size="12">•</text>
          <g v-for="t in topics" :key="t.t"><rect x="1432.500" :y="t.y - 5" width="9" height="9" fill="none" stroke="#2b87cc" stroke-width="3.500" /><text x="1447" :y="t.y + 6" font-size="16" :textLength="t.w" lengthAdjust="spacingAndGlyphs">{{ t.t }}</text></g>
          <path d="M1389 354l6-5v10zM1406 359l11-10M1425 349h11v9h-11zM1455 354l-6-5v10z" stroke="#999" stroke-width="2" fill="#999" />
          <rect x="1389" y="363" width="588" height="19" /><rect x="1389" y="382" width="588" height="46" fill="#2d3133" /><rect x="1389" y="410" width="15" height="18" fill="#f58220" /><rect x="1404" y="410" width="114" height="17" fill="#111" /><text x="1432" y="424" font-size="12" fill="#fff" textLength="84">秦兵的屏幕共享</text><path d="M1409 414h7v7h-7zM1425 413v9" stroke="#ddd" stroke-width="3" />
          <rect x="1418" y="445" width="9" height="9" fill="none" stroke="#999" /><text x="1435" y="454" font-size="12" fill="#666" textLength="410">Interactive Attention Networks for Aspect-Level Sentiment Classification.</text>
          <path d="M1389 459H1977M1980 459H2563" stroke="#e6e6e6" /><g fill="none" stroke="#999"><circle cx="1401" cy="468" r="4" /><circle cx="1988" cy="468" r="4" /><path d="M1419 468l3-3M1419 468l3 3M1429 468l-3-3M1429 468l-3 3M2007 468l3-3M2007 468l3 3M2017 468l-3-3M2017 468l-3 3" /></g>
          <text x="1931" y="472" font-size="10" fill="#888">23 词</text><text x="2526" y="472" font-size="10" fill="#888">0 词</text>
          <path d="M1977 118V478" stroke="#aaa" stroke-width="3" /><path d="M2563 118V408" stroke="#ddd" stroke-width="3" />
          <rect x="1389" y="479" width="1174" height="30" fill="#d5d3d4" /><rect x="1427" y="480" width="262" height="27" fill="#f7f7f7" /><use href="#win" x="1402" y="488" width="12" height="12" /><use href="#search" x="1436" y="488" width="12" height="12" /><text x="1456" y="499" font-size="12" fill="#555" textLength="140">在这里输入你要搜索的内容</text>
          <rect x="2145" y="479" width="35" height="29" fill="#f2f1f1" />
          <g v-for="(a, i) in apps" :key="'m' + i"><use :href="'#' + a.id" :x="1697 + i * 38" y="484" width="20" height="20" /><rect v-if="a.run" :x="1692 + i * 38" y="507" width="31" height="2.500" fill="#0078d7" /></g>
          <use v-for="(t, i) in tray" :key="'q' + i" :href="'#' + t.id" :x="[2332, 2350, 2368, 2389, 2405, 2445][i]" y="487" width="13" height="13" /><text x="2424" y="498" font-size="12" fill="#777">中</text><text x="2484" y="491" font-size="9">18:42</text><text x="2470" y="504" font-size="9" textLength="50">2021/12/20</text><use href="#notify" x="2530" y="485" width="18" height="18" />
          <rect x="2420" y="420" width="143" height="18" fill="#fff" stroke="#ddd" /><use href="#sogou" x="2405" y="414" width="26" height="26" /><text x="2433" y="434" font-size="13" font-weight="700" fill="#1b72c8">中</text>
          <g fill="#1b72c8"><use v-for="(k, i) in ime" :key="'z' + k" :href="'#' + k" :x="2448 + i * 16.500" y="422" width="14" height="14" /></g>

          <rect x="2621" y="500" width="11" height="794" fill="#b5b5b5" />
          <g fill="#333" font-size="26.500">
            <text x="1386" y="645" font-size="42" font-weight="700" textLength="342">word embedding</text>
            <circle cx="1413" cy="707" r="4.500" /><text x="1437" y="716" textLength="374">传统：one-hot representation</text>
            <text x="1487" y="773" textLength="452">每个词语都背表示成one-hot离散向量</text><text x="1487" y="830" textLength="352">不能体现不同单词之间的关联</text>
            <circle cx="1413" cy="877" r="4.500" /><text x="1437" y="886" textLength="143">Embedding</text><text x="1487" y="943" textLength="189">连续的语义表示</text>
            <g fill="none" stroke="#444" stroke-width="1.500"><circle cx="1464" cy="763" r="5" /><circle cx="1464" cy="820" r="5" /><circle cx="1464" cy="933" r="5" /><circle cx="1464" cy="990" r="5" /></g>
            <g class="math harbin" transform="translate(1490 1000) scale(1.354)"><text v-for="(p, i) in harbin" :key="'h' + i" :x="p.x" :y="p.y || 0" :class="p.c" :textLength="p.w" lengthAdjust="spacingAndGlyphs">{{ p.t }}</text></g>
            <text x="1385" y="1084" font-size="40.500" font-weight="700" textLength="406">面向情感方向的词向量</text>
            <circle cx="1413" cy="1145" r="4.500" /><text x="1437" y="1154" textLength="135">传统词向量</text>
          </g>
          <rect x="1387" y="1188" width="6" height="43" fill="#dfe2e5" /><text x="1418" y="1220" font-size="26.500" fill="#777" textLength="378">高位矩阵而不是一个向量更好？</text><path d="M1387 1257v36" stroke="#333" stroke-width="2" />
          <rect x="2300" y="1294" width="334" height="39" fill="#fff" stroke="#ccc" stroke-width="2" /><use href="#sogou" x="2285" y="1287" width="52" height="52" />
          <text x="2343" y="1325" font-size="27" font-weight="700" fill="#1b72c8">中</text>
          <g fill="#1b72c8"><use v-for="(k, i) in ime" :key="'i' + k" :href="'#' + k" :x="2379 + i * 36.600" y="1299" width="31" height="31" /></g>
          <path d="M1336 1376H2632" stroke="#ddd" stroke-width="2" /><circle cx="1360" cy="1403" r="8" fill="none" stroke="#777" stroke-width="1.500" /><path d="M1407 1396l-7 7 7 7M1417 1396l7 7-7 7M1414 1394l-4 18" fill="none" stroke="#777" stroke-width="1.500" />
          <text x="2535" y="1409" font-size="20" fill="#888" textLength="60">105 词</text>
        </svg>
        <i class="scroll"></i>
      </main>
      <footer class="status"><svg viewBox="0 0 60 20" width="60" height="20"><circle cx="8" cy="10" r="6" /><path d="M43 5l-6 5 6 5M49 5l6 5-6 5M48 3l-4 14" /></svg><span>113 词</span></footer>
    </section>

    <aside class="ime">
      <svg class="slogo"><use href="#sogou" /></svg><b>英</b>
      <svg v-for="k in ime" :key="k" class="ik"><use :href="'#' + k" /></svg>
    </aside>

    <footer class="taskbar">
      <div class="start"><svg width="21" height="21"><use href="#win" /></svg></div>
      <div class="find"><svg width="23" height="23"><use href="#search" /></svg><span>在这里输入你要搜索的内容</span></div>
      <div v-for="a in apps" :key="a.id" class="app" :class="{ run: a.run, multi: a.multi, active: a.active }"><svg width="32" height="32"><use :href="'#' + a.id" /></svg></div>
      <div class="tray">
        <svg v-for="t in ['up', 'tmic', 'battery', 'wifi', 'volume']" :key="t" width="20" height="20"><use :href="'#' + t" /></svg>
        <span class="en">英</span><svg class="ts" width="24" height="24"><use href="#sogou" /></svg>
        <div class="clock"><span>18:51</span><span>2021/12/20</span></div>
        <svg class="note-i" width="30" height="30"><use href="#notify" /></svg>
      </div>
    </footer>
  </div>
</template>

<style>
body { margin: 0; overflow: hidden; }
</style>

<style scoped>
.desktop { position: relative; width: 1920px; height: 1080px; overflow: hidden; background: #fff; font-family: "Open Sans", "Noto Sans CJK SC", sans-serif; color: #333; }
.sprite { position: absolute; }
.tglyph { font-family: "Liberation Serif", serif; font-weight: 700; fill: #333; }
.window { position: absolute; top: 0; box-sizing: border-box; width: 960px; height: 1030px; display: flex; flex-direction: column; background: #fff; }
.left { left: 0; }
.right { left: 960px; border: 1px solid #4a4a4a; box-shadow: 0 0 18px rgba(0, 0, 0, .42); }
.titlebar { display: flex; align-items: center; height: 21px; flex: none; padding-left: 9px; font-size: 15.400px; line-height: 20px; color: #999; }
.ticon { width: 20px; height: 20px; margin-right: 5px; }
.title { letter-spacing: .2px; }
.controls { width: 128px; height: 14px; margin-left: auto; margin-right: 25px; overflow: visible; fill: none; stroke: #888; stroke-width: 1.100; }
.right .titlebar { height: 37px; color: #000; }
.right .controls { stroke: #000; margin-right: 25px; }
.menu { display: flex; gap: 17.300px; flex: none; padding-left: 7px; font-size: 15px; line-height: 22px; color: #111; height: 23px; margin-top: 10px; }
.right .menu { margin-top: 0; height: 24px; line-height: 26px; padding-left: 7px; }
blockquote, h1, h2 { margin: 0; }
.linkquote { margin-left: 38px; flex: none; height: 28px; border-left: 5px solid #dfe2e5; padding-left: 18px; font-size: 20px; line-height: 24px; color: #4183c4; }
.linkquote a { text-decoration: underline; text-underline-offset: 2px; }
.lhead { margin: 21px 47px 4px 38px; height: 41px; flex: none; border-bottom: 1px solid #eee; font-size: 35px; line-height: 42px; font-weight: 700; }
.meethead { flex: none; height: 38px; border-top: 1px solid #d5d5d5; background: #fafafa; padding-left: 786px; font-size: 17.300px; line-height: 40px; color: #000; }
.dark { height: 75px; flex: none; background: #2d3133; }
.black { flex: none; background: #000; }
.top { height: 30px; }
.bottom { height: 31px; }
.slide { flex: none; display: block; }
.foot { display: flex; align-items: flex-end; border-bottom: 1px solid #ddd; }
.badge { display: flex; height: 30px; width: 211px; background: #111416; color: #fff; font-size: 20px; line-height: 32px; white-space: nowrap; }
.who { width: 24px; height: 30px; background: #ff7f1e; flex: none; }
.scr { width: 40px; height: 30px; flex: none; }
.badge span { margin-left: 2px; }
.task { display: flex; align-items: center; height: 68px; padding-left: 49px; font-size: 20px; color: #444; }
.box { width: 13px; height: 13px; border: 1px solid #767676; border-radius: 3px; margin-right: 11px; }
.doc { position: relative; flex: 1; overflow: hidden; font-size: 20px; }
.li { display: flex; align-items: center; height: 28px; line-height: 28px; }
.one { padding-left: 53px; }
.two { padding-left: 92px; margin-top: 15px; }
.cut { margin-top: -15px; }
.dash, .disc { width: 8px; height: 8px; border-radius: 50%; background: #333; margin-right: 14px; }
.dash { margin-bottom: 5px; }
.ring { width: 6px; height: 6px; border: 1px solid #333; border-radius: 50%; margin-right: 13px; }
.formula { height: 40px; margin-top: 7px; }
.rhead { margin: 18px 0 0 38px; font-size: 30px; line-height: 39px; height: 40px; }
.trad { margin-top: 22px; }
.rquote { margin: 18px 0 0 38px; border-left: 5px solid #dfe2e5; padding-left: 18px; height: 32px; line-height: 32px; color: #777; }
.code { display: flex; align-items: center; margin: 17px 0 0 42px; height: 24px; font: 18px/24px "DejaVu Sans Mono", monospace; color: #222; white-space: nowrap; }
.pic { width: 19px; height: 17px; margin: 2px 3px 0 0; }
.code u { text-decoration: underline wavy #f00 1px; text-underline-offset: 2px; text-decoration-skip-ink: none; }
.shot { display: block; margin: 7px 0 0 40px; color: #000; }
.scroll { position: absolute; right: 0; top: 486px; width: 9px; bottom: 0; background: #b0b0b0; }
.status { display: flex; align-items: center; justify-content: space-between; flex: none; height: 35px; border-top: 1px solid #ddd; padding: 0 29px 0 11px; font-size: 15px; color: #666; }
.status svg { fill: none; stroke: #666; stroke-width: 1.200; }
.stitle { font: 700 44.500px "Open Sans", "Noto Sans CJK SC", sans-serif; fill: #843c0c; stroke: #843c0c; stroke-width: 1.100px; filter: drop-shadow(1.500px 2px 1px rgba(0, 0, 0, .35)); }
.stitle .tc { font-family: "Noto Sans CJK TC", sans-serif; stroke-width: 0; }
.sbody { font-size: 28.300px; fill: #000; }
.math { font-family: "Liberation Serif", serif; }
.it { font-style: italic; }
.loss { font-size: 22px; fill: #111; }
.sub { font-size: 15px; }
.harbin { font-size: 22.500px; fill: #333; overflow: visible; }
.par { font-size: 26px; }
.sup { font-size: 16px; }
.wd { font-family: "Liberation Serif", serif; font-style: italic; }
.chart { font: 12.600px "Liberation Sans", sans-serif; fill: #111; }
.note { font-size: 17.800px; fill: #111; }
.note .m { font-family: "Liberation Serif", serif; font-style: italic; }
.ime { position: absolute; left: 1682px; top: 932px; width: 238px; height: 30px; box-sizing: border-box; border: 1px solid #b0b3bb; background: #fff; display: flex; align-items: center; fill: #1b72c8; color: #1b72c8; }
.slogo { width: 40px; height: 40px; margin: -4px 1px 0 -21px; flex: none; }
.ime b { font-size: 19px; width: 22px; padding-left: 3px; flex: none; line-height: 28px; }
.ik { width: 24px; height: 24px; flex: none; margin-left: 3px; }
.taskbar { position: absolute; left: 0; top: 1030px; width: 1920px; height: 50px; background: #d5d3d4; display: flex; align-items: stretch; }
.start { width: 60px; display: flex; align-items: center; justify-content: center; flex: none; }
.find { box-sizing: border-box; width: 429px; flex: none; border: 1px solid #c3c1c2; background: #fff; display: flex; align-items: center; padding-left: 13px; font-size: 19px; color: #333; line-height: 46px; }
.find span { margin: 0 0 0 13px; }
.app { position: relative; width: 62px; flex: none; display: flex; align-items: center; justify-content: center; }
.run::after { content: ""; position: absolute; left: 6px; bottom: 0; width: 51px; height: 3px; background: #0078d7; }
.multi::after { background: linear-gradient(90deg, #0078d7 41px, #6fb0e6 41px); }
.active { background: linear-gradient(90deg, #f2f1f1 56px, #b5b3b4 56px, #b5b3b4 57px, #e5e3e4 57px); }
.active::after { left: 0; width: 62px; background: linear-gradient(90deg, #0078d7 57px, #6fb0e6 57px); }
.tray { display: flex; align-items: center; flex: 1; padding-left: 62px; }
.tray > svg { margin-right: 10.200px; flex: none; }
.en { font-size: 20px; color: #444; margin-right: 11px; }
.clock { display: flex; flex-direction: column; align-items: center; width: 92px; font-size: 15.400px; line-height: 23px; color: #111; margin: 0 8px 0 3px; }
.tray .ts { margin-right: 6px; }
.tray .note-i { margin: 6px 5px 0 9px; border: 0; }
</style>
